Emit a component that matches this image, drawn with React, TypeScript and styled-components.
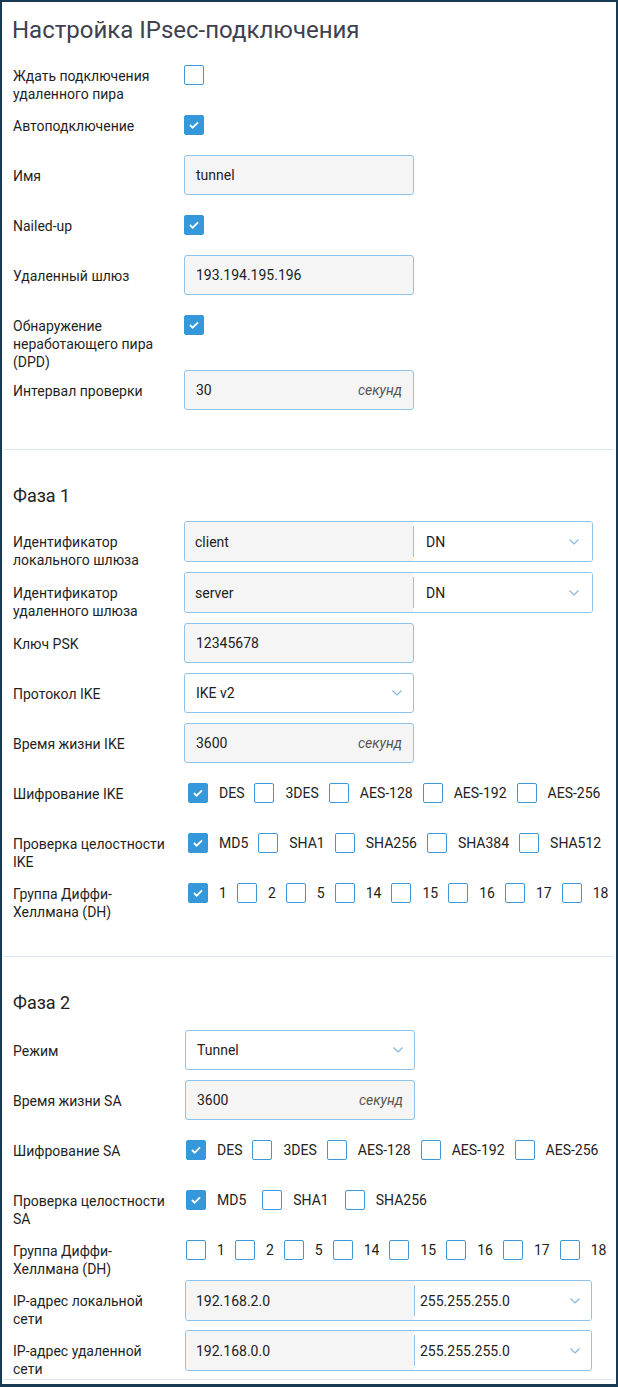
import styled, { createGlobalStyle } from "styled-components";

const GlobalStyle = createGlobalStyle`
  html, body {
    margin: 0;
    padding: 0;
    background: #fff;
  }
  body {
    font-family: Roboto, "Noto Sans", Arial, sans-serif;
  }
  * {
    box-sizing: border-box;
  }
`;

const Frame = styled.div`
  width: 618px;
  height: 1387px;
  border: 2px solid #173a52;
  border-bottom-width: 3px;
  padding: 0 2px;
  background: #fff;
  overflow: hidden;
`;

const Section = styled.section<{ $pt: number; $pb: number }>`
  padding: ${(p) => p.$pt}px 0 ${(p) => p.$pb}px 9px;
  border-bottom: 1px solid #d9e8f3;
`;

const Title = styled.h1`
  margin: 0 0 11px -1px;
  font-size: 24px;
  line-height: 28px;
  font-weight: 400;
  color: #3e414f;
`;

const PhaseTitle = styled.h2<{ $mb: number }>`
  margin: 0 0 ${(p) => p.$mb}px 0;
  font-size: 18px;
  line-height: 24px;
  font-weight: 400;
  color: #222;
`;

const Rows = styled.div`
  display: flex;
  flex-direction: column;
  gap: 10px;
`;

const Row = styled.div<{ $lw: number; $h?: number }>`
  display: grid;
  grid-template-columns: ${(p) => p.$lw}px auto;
  height: ${(p) => p.$h ?? 40}px;
  align-items: start;
`;

const Label = styled.div`
  padding: 12px 12px 0 0;
  font-size: 14px;
  line-height: 18px;
  color: #1f1f1f;
`;

const Control = styled.div`
  min-height: 40px;
  display: flex;
  align-items: center;
`;

const Box = styled.span<{ $on?: boolean }>`
  flex: none;
  width: 20px;
  height: 20px;
  border-radius: 2px;
  border: 1px solid ${(p) => (p.$on ? "#3498db" : "#3d97d8")};
  background: ${(p) => (p.$on ? "#3498db" : "#fff")};
  display: inline-flex;
  align-items: center;
  justify-content: center;
`;

const Field = styled.div<{ $w: number; $white?: boolean }>`
  width: ${(p) => p.$w}px;
  height: 40px;
  border: 1px solid #8fc3ea;
  border-radius: 3px;
  background: ${(p) => (p.$white ? "#fff" : "#f5f5f5")};
  display: flex;
  align-items: center;
  justify-content: space-between;
  padding: 0 11px 0 11px;
  font-size: 14px;
  color: #222;
`;

const Unit = styled.span`
  font-style: italic;
  color: #555;
`;

const Combo = styled.div<{ $w: number }>`
  width: ${(p) => p.$w}px;
  height: 41px;
  border: 1px solid #8fc3ea;
  border-radius: 3px;
  display: flex;
  overflow: hidden;
  font-size: 14px;
  color: #222;
`;

const ComboText = styled.div`
  width: 228px;
  flex: none;
  background: #f5f5f5;
  padding-left: 10px;
  display: flex;
  align-items: center;
`;

const ComboSelect = styled.div<{ $pl: number; $pr: number }>`
  flex: 1;
  position: relative;
  display: flex;
  align-items: center;
  justify-content: space-between;
  padding: 0 ${(p) => p.$pr}px 0 ${(p) => p.$pl}px;
  background: #fff;
  &::before {
    content: "";
    position: absolute;
    left: 0;
    top: 4px;
    bottom: 4px;
    width: 1px;
    background: #8fc3ea;
  }
`;

const Checks = styled.div<{ $pl: number; $gap: number }>`
  display: flex;
  align-items: center;
  gap: ${(p) => p.$gap}px;
  padding-left: ${(p) => p.$pl}px;
`;

const CheckItem = styled.span`
  display: flex;
  align-items: center;
  gap: 11px;
  font-size: 14px;
  color: #222;
`;

const Chevron = () => (
  <svg width="10" height="6" viewBox="0 0 10 6">
    <polyline points="0.5,0.5 5,5 9.5,0.5" fill="none" stroke="#86b6dd" strokeWidth="1.2" />
  </svg>
);

const Check = ({ on }: { on?: boolean }) => (
  <Box $on={on}>
    {on && (
      <svg width="20" height="20" viewBox="0 0 20 20">
        <polyline points="5.5,10 8.5,13 14.5,7" fill="none" stroke="#fff" strokeWidth="2" />
      </svg>
    )}
  </Box>
);

const CheckList = ({
  items,
  on,
  pl,
  gap = 10,
}: {
  items: string[];
  on: number[];
  pl: number;
  gap?: number;
}) => (
  <Checks $pl={pl} $gap={gap}>
    {items.map((t, i) => (
      <CheckItem key={t}>
        <Check on={on.includes(i)} />
        {t}
      </CheckItem>
    ))}
  </Checks>
);

const DH = ["1", "2", "5", "14", "15", "16", "17", "18"];
const ENC = ["DES", "3DES", "AES-128", "AES-192", "AES-256"];

export default function App() {
  return (
    <>
      <GlobalStyle />
      <Frame>
        <Section $pt={14} $pb={39}>
          <Title>Настройка IPsec-подключения</Title>
          <Rows>
            <Row $lw={171}>
              <Label>Ждать подключения удаленного пира</Label>
              <Control><Check /></Control>
            </Row>
            <Row $lw={171}>
              <Label>Автоподключение</Label>
              <Control><Check on /></Control>
            </Row>
            <Row $lw={171}>
              <Label>Имя</Label>
              <Control><Field $w={230}>tunnel</Field></Control>
            </Row>
            <Row $lw={171}>
              <Label>Nailed-up</Label>
              <Control><Check on /></Control>
            </Row>
            <Row $lw={171}>
              <Label>Удаленный шлюз</Label>
              <Control><Field $w={230}>193.194.195.196</Field></Control>
            </Row>
            <Row $lw={171} $h={55}>
              <Label>Обнаружение неработающего пира (DPD)</Label>
              <Control><Check on /></Control>
            </Row>
            <Row $lw={171}>
              <Label>Интервал проверки</Label>
              <Control>
                <Field $w={230}>30<Unit>секунд</Unit></Field>
              </Control>
            </Row>
          </Rows>
        </Section>

        <Section $pt={34} $pb={43}>
          <PhaseTitle $mb={13}>Фаза 1</PhaseTitle>
          <Rows>
            <Row $lw={171} $h={41}>
              <Label>Идентификатор локального шлюза</Label>
              <Control>
                <Combo $w={409}>
                  <ComboText>client</ComboText>
                  <ComboSelect $pl={13} $pr={13}>DN<Chevron /></ComboSelect>
                </Combo>
              </Control>
            </Row>
            <Row $lw={171} $h={41}>
              <Label>Идентификатор удаленного шлюза</Label>
              <Control>
                <Combo $w={409}>
                  <ComboText>server</ComboText>
                  <ComboSelect $pl={13} $pr={13}>DN<Chevron /></ComboSelect>
                </Combo>
              </Control>
            </Row>
            <Row $lw={171}>
              <Label>Ключ PSK</Label>
              <Control><Field $w={230}>12345678</Field></Control>
            </Row>
            <Row $lw={171}>
              <Label>Протокол IKE</Label>
              <Control><Field $w={230} $white>IKE v2<Chevron /></Field></Control>
            </Row>
            <Row $lw={171}>
              <Label>Время жизни IKE</Label>
              <Control>
                <Field $w={230}>3600<Unit>секунд</Unit></Field>
              </Control>
            </Row>
            <Row $lw={171}>
              <Label>Шифрование IKE</Label>
              <Control><CheckList items={ENC} on={[0]} pl={4} /></Control>
            </Row>
            <Row $lw={171}>
              <Label>Проверка целостности IKE</Label>
              <Control>
                <CheckList items={["MD5", "SHA1", "SHA256", "SHA384", "SHA512"]} on={[0]} pl={4} />
              </Control>
            </Row>
            <Row $lw={171}>
              <Label>Группа Диффи-Хеллмана (DH)</Label>
              <Control><CheckList items={DH} on={[0]} pl={4} /></Control>
            </Row>
          </Rows>
        </Section>

        <Section $pt={34} $pb={9}>
          <PhaseTitle $mb={15}>Фаза 2</PhaseTitle>
          <Rows>
            <Row $lw={172}>
              <Label>Режим</Label>
              <Control><Field $w={230} $white>Tunnel<Chevron /></Field></Control>
            </Row>
            <Row $lw={172}>
              <Label>Время жизни SA</Label>
              <Control>
                <Field $w={230}>3600<Unit>секунд</Unit></Field>
              </Control>
            </Row>
            <Row $lw={172}>
              <Label>Шифрование SA</Label>
              <Control><CheckList items={ENC} on={[0]} pl={1} /></Control>
            </Row>
            <Row $lw={172}>
              <Label>Проверка целостности SA</Label>
              <Control>
                <CheckList items={["MD5", "SHA1", "SHA256"]} on={[0]} pl={1} gap={16} />
              </Control>
            </Row>
            <Row $lw={172}>
              <Label>Группа Диффи-Хеллмана (DH)</Label>
              <Control><CheckList items={DH} on={[]} pl={1} /></Control>
            </Row>
            <Row $lw={172}>
              <Label>IP-адрес локальной сети</Label>
              <Control>
                <Combo $w={407}>
                  <ComboText>192.168.2.0</ComboText>
                  <ComboSelect $pl={6} $pr={11}>255.255.255.0<Chevron /></ComboSelect>
                </Combo>
              </Control>
            </Row>
            <Row $lw={172}>
              <Label>IP-адрес удаленной сети</Label>
              <Control>
                <Combo $w={407}>
                  <ComboText>192.168.0.0</ComboText>
                  <ComboSelect $pl={6} $pr={11}>255.255.255.0<Chevron /></ComboSelect>
                </Combo>
              </Control>
            </Row>
          </Rows>
        </Section>
      </Frame>
    </>
  );
}
